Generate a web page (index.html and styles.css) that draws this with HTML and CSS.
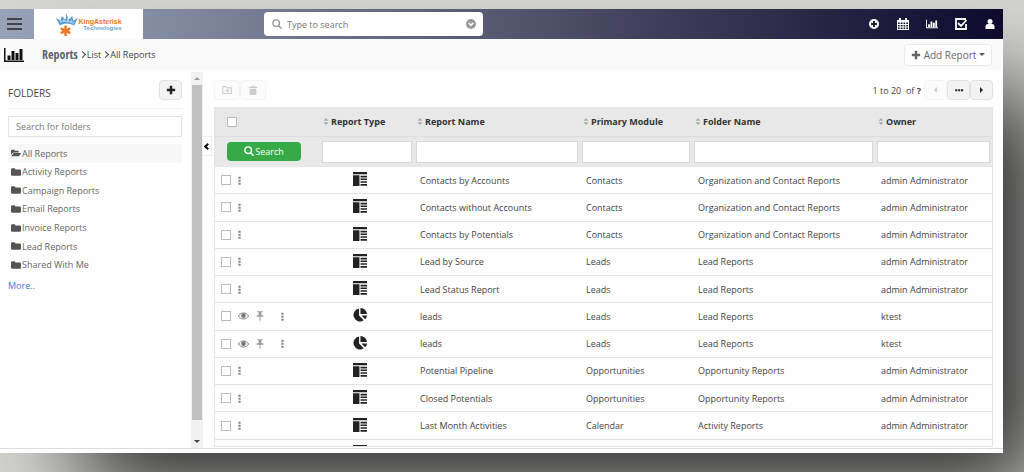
FILE: index.html
```html
<!DOCTYPE html>
<html lang="en">
<head>
  <meta charset="utf-8">
  <title>Reports</title>
  <link rel="stylesheet" href="styles.css">
</head>
<body>
  <!-- icons used more than once -->
  <svg class="sprite" aria-hidden="true">
    <symbol id="folder" viewBox="0 0 16 14"><path d="M0 3a2 2 0 0 1 2-2h3a2 2 0 0 1 2 2h7a2 2 0 0 1 2 2v6a2 2 0 0 1-2 2H2a2 2 0 0 1-2-2z"/></symbol>
    <symbol id="folder-open" viewBox="0 0 18 14"><path d="M0 10V3a2 2 0 0 1 2-2h3a2 2 0 0 1 2 2h5a2 2 0 0 1 2 2v1H6a4 4 0 0 0-3 1zM1 12l3-4a2 2 0 0 1 2-1h11q1 0 1 1l-3 4a2 2 0 0 1-2 1H2q-1 0-1-1z"/></symbol>
    <symbol id="chart" viewBox="0 0 20 16"><path d="M0 1h1.500v12.500H20V15H0zM3.500 8.500h3v4.500h-3zM7.500 4h3v9h-3zM11.500 6h3v7h-3zM15.500 2h3v11h-3z"/></symbol>
    <symbol id="plus" viewBox="0 0 12 12"><path d="M4.500 1h3v3.500H11v3H7.500V11h-3V7.500H1v-3h3.500z"/></symbol>
    <symbol id="glass" viewBox="0 0 14 14"><path d="M5.800 1.200a4.600 4.600 0 1 0 0 9.200 4.600 4.600 0 0 0 0-9.200M9.300 9.300l3.500 3.500" fill="none" stroke="currentColor" stroke-width="2" stroke-linecap="round"/></symbol>
    <symbol id="sort" viewBox="0 0 8 10"><path d="M4 0l3.500 4h-7zM4 10l3.500-4h-7z"/></symbol>
    <symbol id="dots" viewBox="0 0 4 12"><path d="M.5 1h3v2.500h-3zM.5 5h3v2.500h-3zM.5 9h3v2.500h-3z"/></symbol>
    <symbol id="detail" viewBox="0 0 13 13"><path d="M0 0h13v2H0zM0 3h6v10H0zM7 3.500h6V5H7zM7 6h6v1.500H7zM7 8.500h6V10H7zM7 11.200h6v1.500H7z"/></symbol>
    <symbol id="pie" viewBox="0 0 15 15"><path d="M6.500.5V8l5 5.200A7 7 0 1 1 6.500.5zM8 0a7 7 0 0 1 7 6.500H8zM9 8h6a6 6 0 0 1-2 4z"/></symbol>
    <symbol id="eye" viewBox="0 0 18 12"><path d="M9 1c4 0 7 3 8.500 5C16 8 13 11 9 11S2 8 .5 6C2 4 5 1 9 1z" fill="none" stroke="currentColor" stroke-width="1.500"/><circle cx="9" cy="5.500" r="3.800"/></symbol>
    <symbol id="pin" viewBox="0 0 12 14"><path d="M2 0h8v1.500H8V6h3v2H6.700v6H5.300V8H1V6h3V1.500H2z"/></symbol>
  </svg>

  <div class="window">
    <header class="navbar">
      <button class="menu" aria-label="Menu"><span></span><span></span><span></span></button>
      <a class="logo" href="#" aria-label="KingAsterisk Technologies">
        <svg class="crown" viewBox="0 0 24 26">
          <path d="M5 14L1 6l5 3 1-5 4 4 1-7 2 7 4-4 1 5 5-3-4 8q-8-4-15 0z" fill="#5b9bd0"/>
          <path d="M6 11L4 8l4 2 1-3 3 3 1-4 2 4 3-2v3l3-1-2 2q-7-3-13-1z" fill="#b3d4ec"/>
          <path d="M11 14v11M6 17l10 5M16 17L6 22" stroke="#e87a25" stroke-width="2.500"/>
        </svg>
        <span class="brand">KingAsterisk<small>Technologies</small></span>
      </a>
      <div class="search">
        <svg class="icon"><use href="#glass"/></svg>
        <input type="text" placeholder="Type to search" aria-label="Search">
        <svg class="icon" viewBox="0 0 12 12"><circle cx="6" cy="6" r="6"/><path d="M3.200 4.800L6 7.500l2.800-2.700" fill="none" stroke="#fff" stroke-width="1.800"/></svg>
      </div>
      <nav class="tools">
        <a href="#" aria-label="Quick create"><svg class="icon" viewBox="0 0 12 12"><path fill-rule="evenodd" d="M6 1a5 5 0 1 0 0 10A5 5 0 0 0 6 1zM5 3h2v2h2v2H7v2H5V7H3V5h2z"/></svg></a>
        <a href="#" aria-label="Calendar"><svg class="icon" viewBox="0 0 12 12"><path fill-rule="evenodd" d="M0 2h2V0h2v2h4V0h2v2h2v10H0zM1 4.500v1.600h1.700V4.500zm2.700 0v1.600h1.800V4.500zm2.800 0v1.600h1.800V4.500zm2.800 0v1.600H11V4.500zM1 7v1.600h1.700V7zm2.700 0v1.600h1.800V7zm2.800 0v1.600h1.800V7zm2.800 0v1.600H11V7zM1 9.500V11h1.700V9.500zm2.700 0V11h1.800V9.500zm2.800 0V11h1.800V9.500zm2.800 0V11H11V9.500z"/></svg></a>
        <a href="#" aria-label="Reports"><svg class="icon"><use href="#chart"/></svg></a>
        <a href="#" aria-label="Tasks"><svg class="icon" viewBox="0 0 12 12"><path d="M11 6v5H1V1h10M3 5l3 3 5.500-6" fill="none" stroke="currentColor" stroke-width="1.800"/></svg></a>
        <a href="#" aria-label="User"><svg class="icon" viewBox="0 0 12 12"><circle cx="6" cy="3.500" r="2.500"/><path d="M1.500 11V8.500Q1.500 6 4 6h4q2.500 0 2.500 2.500V11z"/></svg></a>
      </nav>
    </header>

    <div class="subbar">
      <svg class="module-icon"><use href="#chart"/></svg>
      <h1>Reports</h1>
      <div class="crumbs"><span class="angle"></span><a href="#">List</a><span class="angle"></span><a href="#">All Reports</a></div>
      <button class="add-report"><svg class="icon"><use href="#plus"/></svg>Add Report<span class="caret"></span></button>
    </div>

    <div class="content">
      <aside class="sidebar">
        <div class="folders-head">
          <h2>FOLDERS</h2>
          <button class="btn" aria-label="Add folder"><svg class="icon"><use href="#plus"/></svg></button>
        </div>
        <input class="folder-search" type="text" placeholder="Search for folders" aria-label="Search for folders">
        <ul class="folders">
          <li class="active"><a href="#"><svg class="icon"><use href="#folder-open"/></svg>All Reports</a></li>
          <li><a href="#"><svg class="icon"><use href="#folder"/></svg>Activity Reports</a></li>
          <li><a href="#"><svg class="icon"><use href="#folder"/></svg>Campaign Reports</a></li>
          <li><a href="#"><svg class="icon"><use href="#folder"/></svg>Email Reports</a></li>
          <li><a href="#"><svg class="icon"><use href="#folder"/></svg>Invoice Reports</a></li>
          <li><a href="#"><svg class="icon"><use href="#folder"/></svg>Lead Reports</a></li>
          <li><a href="#"><svg class="icon"><use href="#folder"/></svg>Shared With Me</a></li>
        </ul>
        <a class="more" href="#">More..</a>
      </aside>
      <div class="scrollbar"><span class="up"></span><span class="thumb"></span><span class="down"></span></div>
      <button class="collapse" aria-label="Hide folders"><span class="angle left"></span></button>

      <main>
        <div class="actions">
          <div class="group">
            <button class="btn" disabled aria-label="Move"><svg class="icon" viewBox="0 0 14 12"><path d="M1 1h4l1 2h7v8H1zM4 7h5M7 5l2 2-2 2" fill="none" stroke="currentColor" stroke-width="1.500"/></svg></button>
            <button class="btn" disabled aria-label="Delete"><svg class="icon" viewBox="0 0 12 12"><path d="M1 2h3V1h4v1h3v1.500H1zM2 4.500h8V12H2z"/></svg></button>
          </div>
          <div class="pager">
            <span class="range">1 to 20 &nbsp;of <b>?</b></span>
            <button class="btn" disabled aria-label="Previous"><span class="tri prev"></span></button>
            <button class="btn" aria-label="Go to page"><svg class="icon" viewBox="0 0 12 12"><path d="M1.500 5h2.500v2.500H1.500zM5 5h2.500v2.500H5zM8.500 5H11v2.500H8.500z"/></svg></button>
            <button class="btn" aria-label="Next"><span class="tri next"></span></button>
          </div>
        </div>

        <div class="table-wrap">
          <table>
            <colgroup><col class="c-tools"><col class="c-type"><col class="c-name"><col class="c-module"><col class="c-folder"><col class="c-owner"></colgroup>
            <thead>
              <tr class="titles">
                <th><input type="checkbox" aria-label="Select all"></th>
                <th><svg class="sort"><use href="#sort"/></svg>Report Type</th>
                <th><svg class="sort"><use href="#sort"/></svg>Report Name</th>
                <th><svg class="sort"><use href="#sort"/></svg>Primary Module</th>
                <th><svg class="sort"><use href="#sort"/></svg>Folder Name</th>
                <th><svg class="sort"><use href="#sort"/></svg>Owner</th>
              </tr>
              <tr class="filters">
                <td><button class="search-btn"><svg class="icon"><use href="#glass"/></svg>Search</button></td>
                <td><input type="text" aria-label="Report Type"></td>
                <td><input type="text" aria-label="Report Name"></td>
                <td><input type="text" aria-label="Primary Module"></td>
                <td><input type="text" aria-label="Folder Name"></td>
                <td><input type="text" aria-label="Owner"></td>
              </tr>
            </thead>
            <tbody id="rows"></tbody>
          </table>
        </div>
      </main>
    </div>
  </div>

  <script>
    const reports = [
      ['detail', 'Contacts by Accounts', 'Contacts', 'Organization and Contact Reports', 'admin Administrator'],
      ['detail', 'Contacts without Accounts', 'Contacts', 'Organization and Contact Reports', 'admin Administrator'],
      ['detail', 'Contacts by Potentials', 'Contacts', 'Organization and Contact Reports', 'admin Administrator'],
      ['detail', 'Lead by Source', 'Leads', 'Lead Reports', 'admin Administrator'],
      ['detail', 'Lead Status Report', 'Leads', 'Lead Reports', 'admin Administrator'],
      ['pie', 'leads', 'Leads', 'Lead Reports', 'ktest'],
      ['pie', 'leads', 'Leads', 'Lead Reports', 'ktest'],
      ['detail', 'Potential Pipeline', 'Opportunities', 'Opportunity Reports', 'admin Administrator'],
      ['detail', 'Closed Potentials', 'Opportunities', 'Opportunity Reports', 'admin Administrator'],
      ['detail', 'Last Month Activities', 'Calendar', 'Activity Reports', 'admin Administrator'],
      ['detail', '', '', '', '']
    ];
    const icon = (name) => `<svg class="i-${name}"><use href="#${name}"/></svg>`;

    document.getElementById('rows').innerHTML = reports.map(([type, ...cells]) => `
      <tr>
        <td><div class="row-tools"><input type="checkbox" aria-label="Select ${cells[0]}">${type === 'pie' ? icon('eye') + icon('pin') : ''}${icon('dots')}</div></td>
        <td class="type">${icon(type)}</td>
        ${cells.map((text) => `<td>${text}</td>`).join('')}
      </tr>`
    ).join('');
  </script>
</body>
</html>
```
FILE: styles.css
```css
* {
  box-sizing: border-box;
}
body {
  margin: 0;
  height: 100vh;
  overflow: hidden;
  padding: 9px 21px 19px 0;
  font-family: "Open Sans", "Noto Sans", sans-serif;
  font-size: 9px;
  color: #444;
  background: #d4d4d1;
}
button, input {
  font: inherit;
  color: inherit;
  margin: 0;
}
button {
  cursor: pointer;
  padding: 0;
}
a {
  color: inherit;
  text-decoration: none;
}
svg {
  fill: currentColor;
  flex: none;
}
.sprite {
  display: none;
}
.icon {
  width: 10px;
  height: 10px;
}
.window {
  height: 100%;
  display: flex;
  flex-direction: column;
  background: #fefefe;
  box-shadow: 60px 60px 90px -22px #2a2a2a;
}

/* top bar */
.navbar {
  height: 30px;
  flex: none;
  display: flex;
  align-items: center;
  background: linear-gradient(90deg, #98a3b9, #55566f 50%, #0d0a2c);
}
.menu {
  width: 34px;
  height: 30px;
  padding: 0 12px 0 7px;
  border: none;
  background: none;
  display: flex;
  flex-direction: column;
  justify-content: center;
  gap: 3px;
}
.menu span {
  height: 2px;
  background: #444;
}
.logo {
  width: 109px;
  height: 30px;
  background: #fff;
  display: flex;
  align-items: center;
  justify-content: center;
}
.crown {
  width: 23px;
  height: 25px;
}
.brand {
  font: bold 7px/7px "Liberation Sans", sans-serif;
  color: #e87a25;
}
.brand small {
  display: block;
  font-size: 6px;
  text-align: right;
  line-height: 6px;
  color: #6ba6d6;
}
.search {
  width: 219px;
  height: 24px;
  margin-left: 121px;
  padding: 0 7px 0 8px;
  background: #fff;
  border-radius: 4px;
  display: flex;
  align-items: center;
  gap: 5px;
  color: #999;
}
.search input {
  flex: 1;
  min-width: 0;
  border: none;
  padding: 0;
  outline: none;
}
::placeholder {
  color: #777;
  opacity: 1;
}
.tools {
  margin-left: auto;
  padding-right: 7px;
  display: flex;
  gap: 17px;
  color: #fff;
}
.tools .icon {
  width: 12px;
  height: 12px;
  display: block;
}

/* breadcrumb bar */
.subbar {
  height: 31px;
  flex: none;
  display: flex;
  align-items: center;
  padding: 0 11px 0 4px;
  background: #fafafa;
}
.module-icon {
  width: 20px;
  height: 16px;
  color: #111;
}
h1 {
  margin: 0 2px 0 18px;
  font: 12px "Open Sans Condensed", "Liberation Sans Narrow", sans-serif;
  color: #5a6572;
}
.crumbs {
  display: flex;
  align-items: center;
  gap: 2px;
}
.angle {
  width: 5px;
  height: 5px;
  border: solid #444;
  border-width: 1px 1px 0 0;
  transform: rotate(45deg);
}
.angle.left {
  border-width: 0 0 2px 2px;
  border-color: #111;
}
.add-report {
  margin-left: auto;
  width: 88px;
  height: 22px;
  display: flex;
  align-items: center;
  justify-content: center;
  gap: 3px;
  font-size: 10px;
  color: #666;
  background: #fff;
  border: 1px solid #e8e8e8;
  border-radius: 3px;
}
.caret {
  border: 3px solid transparent;
  border-top-color: #555;
  border-bottom: none;
}

.content {
  flex: 1;
  min-height: 0;
  display: flex;
  margin-bottom: 4px;
  border-bottom: 1px solid #ddd;
}

/* folders */
.sidebar {
  width: 191px;
  padding: 10px 9px 0 8px;
}
.folders-head {
  display: flex;
  align-items: flex-end;
  justify-content: space-between;
  padding-bottom: 8px;
  border-bottom: 1px solid #f0f0f0;
}
h2 {
  margin: 0;
  font-size: 10px;
  font-weight: normal;
}
.btn {
  width: 23px;
  height: 20px;
  display: flex;
  align-items: center;
  justify-content: center;
  color: #222;
  background: #f3f3f3;
  border: 1px solid #e2e2e2;
  border-radius: 4px;
}
.btn:disabled {
  color: #ccc;
  background: #fcfcfc;
  border-color: #f4f4f4;
}
.folder-search {
  width: 100%;
  height: 21px;
  margin: 7px 0;
  padding: 0 7px;
  border: 1px solid #e2e2e2;
}
.folders {
  list-style: none;
  margin: 0;
  padding: 0;
  height: 130px;
  display: grid;
  grid-auto-rows: 1fr;
}
.folders a {
  height: 100%;
  padding-left: 3px;
  display: flex;
  align-items: center;
  gap: 1px;
  color: #666;
}
.folders .icon {
  color: #555;
}
.folders .active {
  background: #f7f7f7;
}
.more {
  display: block;
  margin-top: 5px;
  color: #3a77d0;
}
.scrollbar {
  width: 12px;
  margin-top: 2px;
  background: #f1f1f1;
  display: flex;
  flex-direction: column;
  align-items: center;
}
.up, .down {
  margin: 5px 0;
  border: 3px solid transparent;
}
.up {
  border-top: none;
  border-bottom-color: #999;
}
.down {
  border-bottom: none;
  border-top-color: #444;
}
.thumb {
  width: 10px;
  flex: 1;
  margin-bottom: 15px;
  background: #c0c0c0;
}
.collapse {
  width: 9px;
  height: 20px;
  margin-top: 66px;
  padding-left: 2px;
  display: flex;
  align-items: center;
  background: #fff;
  border: 1px solid #eee;
  border-left: none;
}

/* list */
main {
  flex: 1;
  min-width: 0;
  display: flex;
  flex-direction: column;
  padding: 10px 10px 1px 2px;
}
.actions {
  display: flex;
  justify-content: space-between;
  margin-bottom: 7px;
}
.group, .pager {
  display: flex;
  align-items: center;
}
.group .btn {
  width: 26px;
}
.range {
  margin-right: 3px;
}
.tri {
  border: 3px solid transparent;
}
.prev {
  border-left: none;
  border-right-color: #ccc;
}
.next {
  border-right: none;
  border-left-color: #222;
}
.table-wrap {
  flex: 1;
  min-height: 0;
  overflow: hidden;
  border: 1px solid #e4e4e4;
  border-top: none;
}
table {
  width: 100%;
  height: 360px;
  table-layout: fixed;
  border-spacing: 0;
}
.c-tools { width: 105px; }
.c-type { width: 94px; }
.c-name { width: 166px; }
.c-module { width: 112px; }
.c-folder { width: 183px; }
.c-owner { width: 117px; }
th, td {
  padding: 0 0 0 6px;
  text-align: left;
}
thead {
  background: #e8e8e8;
}
.titles th {
  height: 30px;
  padding-left: 3px;
  font-weight: bold;
  color: #333;
  border-bottom: 1px solid #dedede;
}
.titles th:first-child {
  padding-left: 12px;
}
.sort {
  width: 6px;
  height: 7px;
  margin-right: 2px;
  color: #aaa;
}
.filters td {
  height: 30px;
  padding: 0 2px;
}
.filters td:first-child {
  padding: 0 2px 2px 12px;
}
.filters input {
  display: block;
  width: 100%;
  height: 22px;
  border: 1px solid #d8d8d8;
  background: #fff;
}
.search-btn {
  width: 74px;
  height: 19px;
  display: flex;
  align-items: center;
  justify-content: center;
  gap: 1px;
  color: #fff;
  background: #35aa47;
  border: none;
  border-radius: 4px;
}
tbody td {
  border-bottom: 1px solid #e4e4e4;
}
input[type=checkbox] {
  appearance: none;
  display: block;
  width: 10px;
  height: 10px;
  background: #fff;
  border: 1px solid #bbb;
}
.row-tools {
  display: flex;
  align-items: center;
  gap: 7px;
}
.i-dots {
  width: 3px;
  height: 9px;
  color: #888;
}
.i-eye {
  width: 11px;
  height: 8px;
  color: #777;
}
.i-pin {
  width: 8px;
  height: 10px;
  margin-right: 10px;
  color: #999;
}
td.type {
  padding: 0 14px 2px 0;
  text-align: center;
  color: #222;
}
.type svg {
  display: block;
  margin: 0 auto;
  width: 14px;
  height: 14px;
}
```
